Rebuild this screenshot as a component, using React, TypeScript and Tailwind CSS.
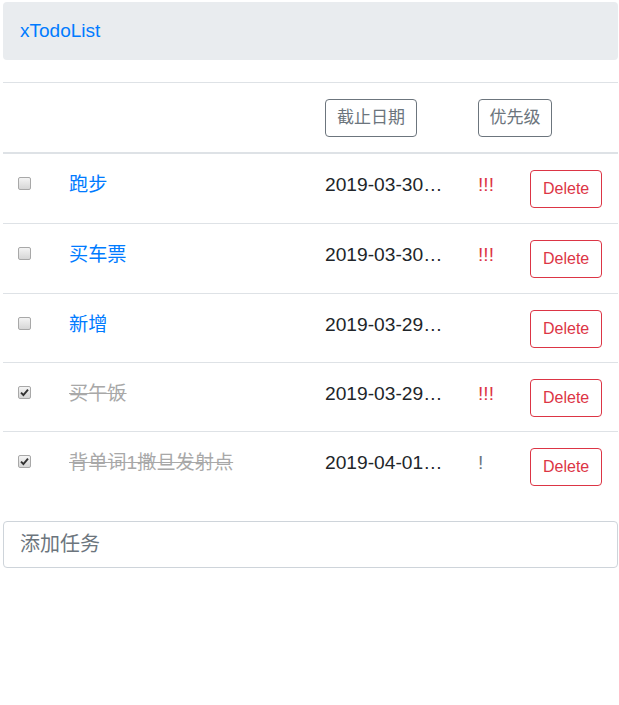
import React from "react";

interface Todo {
  id: number;
  title: string;
  date: string;
  priority: string;
  done: boolean;
  rowClass: string;
}

const todos: Todo[] = [
  { id: 1, title: "跑步", date: "2019-03-30…", priority: "!!!", done: false, rowClass: "h-[69px]" },
  { id: 2, title: "买车票", date: "2019-03-30…", priority: "!!!", done: false, rowClass: "h-[70px] border-t" },
  { id: 3, title: "新增", date: "2019-03-29…", priority: "", done: false, rowClass: "h-[69px] border-t" },
  { id: 4, title: "买午饭", date: "2019-03-29…", priority: "!!!", done: true, rowClass: "h-[69px] border-t" },
  { id: 5, title: "背单词1撒旦发射点", date: "2019-04-01…", priority: "!", done: true, rowClass: "h-[69px] border-t" },
];

function Checkbox({ checked }: { checked: boolean }) {
  return (
    <span className="flex h-[13px] w-[13px] items-center justify-center rounded-[2px] border border-[#a8a8a8] bg-gradient-to-b from-[#f4f4f4] to-[#d6d6d6]">
      {checked && (
        <svg width="9" height="9" viewBox="0 0 9 9">
          <path d="M1 4.6 L3.4 7 L8 1.6" fill="none" stroke="#333" strokeWidth="1.9" />
        </svg>
      )}
    </span>
  );
}

export default function App() {
  return (
    <div
      className="min-h-screen bg-white pl-[3px] pr-[1px] pt-[2px] text-[#212529]"
      style={{ fontFamily: '"Liberation Sans", "Noto Sans CJK SC", sans-serif' }}
    >
      {/* Navbar */}
      <div className="flex h-[58px] items-center rounded-[4px] bg-[#e9ecef] pl-[17px]">
        <span className="text-[19px] text-[#007bff]">xTodoList</span>
      </div>

      {/* Table */}
      <div className="mt-[22px]">
        <div className="grid h-[72px] grid-cols-[54px_256px_153px_52px_1fr] items-center border-t border-b-2 border-[#dee2e6]">
          <div />
          <div />
          <div className="pl-3">
            <button className="h-[38px] rounded-[4px] border border-[#6c757d] px-[11px] text-[17px] text-[#6c757d]">
              截止日期
            </button>
          </div>
          <div className="col-span-2 pl-3">
            <button className="h-[38px] rounded-[4px] border border-[#6c757d] px-[10.5px] text-[17px] text-[#6c757d]">
              优先级
            </button>
          </div>
        </div>

        {todos.map((todo) => (
          <div
            key={todo.id}
            className={`grid grid-cols-[54px_256px_153px_52px_1fr] items-start border-[#dee2e6] ${todo.rowClass}`}
          >
            <div className="pl-[15px] pt-[23px]">
              <Checkbox checked={todo.done} />
            </div>
            <div className="pl-3 pt-[16px] text-[19.2px] leading-[29px]">
              <span
                className={
                  todo.done ? "text-[#a8a8a8] line-through" : "text-[#007bff]"
                }
              >
                {todo.title}
              </span>
            </div>
            <div className="truncate pl-3 pt-[16px] text-[19.2px] leading-[29px]">
              {todo.date}
            </div>
            <div
              className={`pl-3 pt-[16px] text-[19.2px] leading-[29px] ${
                todo.priority === "!!!" ? "text-[#dc3545]" : "text-[#6c757d]"
              }`}
            >
              {todo.priority}
            </div>
            <div className="pl-3 pt-[16px]">
              <button className="h-[38px] rounded-[4px] border border-[#dc3545] px-3 text-[16px] text-[#dc3545]">
                Delete
              </button>
            </div>
          </div>
        ))}
      </div>

      {/* Add task */}
      <input
        className="mt-[21px] h-[47px] w-full rounded-[4px] border border-[#ced4da] px-4 text-[20px] placeholder:text-[#6c757d] focus:outline-none"
        placeholder="添加任务"
      />
    </div>
  );
}
